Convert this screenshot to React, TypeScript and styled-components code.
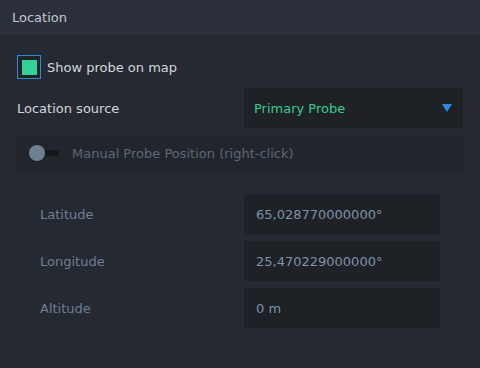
import styled, { createGlobalStyle } from "styled-components";

type FieldProps = {
  label: string;
  value: string;
};

const fields: FieldProps[] = [
  { label: "Latitude", value: "65,028770000000°" },
  { label: "Longitude", value: "25,470229000000°" },
  { label: "Altitude", value: "0 m" },
];

const Field = ({ label, value }: FieldProps) => (
  <FieldRow>
    <FieldLabel>{label}</FieldLabel>
    <FieldInput>{value}</FieldInput>
  </FieldRow>
);

export default function App() {
  return (
    <>
      <GlobalStyle />
      <Panel>
        <Header>Location</Header>
        <Body>
          <CheckRow>
            <CheckBox>
              <CheckMark />
            </CheckBox>
            <CheckLabel>Show probe on map</CheckLabel>
          </CheckRow>
          <SourceRow>
            <SourceLabel>Location source</SourceLabel>
            <Select>
              <SelectText>Primary Probe</SelectText>
              <Caret viewBox="0 0 10 8">
                <polygon points="0,0 10,0 5,8" fill="#2b8be0" />
              </Caret>
            </Select>
          </SourceRow>
          <ManualRow>
            <Toggle>
              <Knob />
              <Track />
            </Toggle>
            <ManualLabel>Manual Probe Position (right-click)</ManualLabel>
          </ManualRow>
          <Fields>
            {fields.map((f) => (
              <Field key={f.label} label={f.label} value={f.value} />
            ))}
          </Fields>
        </Body>
      </Panel>
    </>
  );
}

const GlobalStyle = createGlobalStyle`
  html, body {
    margin: 0;
    padding: 0;
    background: #252a32;
  }
  body {
    font-family: "DejaVu Sans", sans-serif;
    font-size: 13px;
  }
`;

const Panel = styled.div`
  width: 480px;
  height: 368px;
  background: #252a32;
  display: flex;
  flex-direction: column;
`;

const Header = styled.div`
  height: 35px;
  background: #2b303b;
  color: #c3c8d0;
  padding: 0 12px;
  display: flex;
  align-items: center;
  padding-bottom: 1px;
  box-sizing: border-box;
`;

const Body = styled.div`
  padding: 20px 17px 0 17px;
  display: flex;
  flex-direction: column;
`;

const CheckRow = styled.div`
  display: flex;
  align-items: center;
  gap: 6px;
  height: 24px;
`;

const CheckBox = styled.div`
  width: 24px;
  height: 24px;
  box-sizing: border-box;
  border: 1px solid #2f8ad8;
  background: #1f2429;
  display: flex;
  align-items: center;
  justify-content: center;
`;

const CheckMark = styled.div`
  width: 15px;
  height: 15px;
  background: #34d195;
`;

const CheckLabel = styled.span`
  color: #d2d6dc;
`;

const SourceRow = styled.div`
  display: flex;
  align-items: center;
  justify-content: space-between;
  margin-top: 9px;
`;

const SourceLabel = styled.span`
  color: #d2d6dc;
`;

const Select = styled.div`
  width: 219px;
  height: 40px;
  background: #1e2226;
  display: flex;
  align-items: center;
  justify-content: space-between;
  padding: 0 11px 0 10px;
  box-sizing: border-box;
`;

const SelectText = styled.span`
  color: #33cc8c;
`;

const Caret = styled.svg`
  width: 10px;
  height: 8px;
`;

const ManualRow = styled.div`
  height: 36px;
  margin-top: 7px;
  background: #22262c;
  display: flex;
  align-items: center;
  padding-left: 12px;
`;

const Toggle = styled.div`
  display: flex;
  align-items: center;
  width: 30px;
`;

const Knob = styled.div`
  width: 16px;
  height: 16px;
  border-radius: 50%;
  background: #6d7f90;
`;

const Track = styled.div`
  width: 14px;
  height: 6px;
  background: #15181b;
`;

const ManualLabel = styled.span`
  color: #5b6878;
  margin-left: 13px;
`;

const Fields = styled.div`
  display: flex;
  flex-direction: column;
  gap: 7px;
  margin-top: 23px;
  padding-left: 23px;
  padding-right: 23px;
`;

const FieldRow = styled.div`
  display: flex;
  align-items: center;
  justify-content: space-between;
`;

const FieldLabel = styled.span`
  color: #6f7f92;
`;

const FieldInput = styled.div`
  width: 196px;
  height: 40px;
  background: #1e2226;
  color: #7e92a8;
  display: flex;
  align-items: center;
  padding-left: 12px;
  box-sizing: border-box;
`;
